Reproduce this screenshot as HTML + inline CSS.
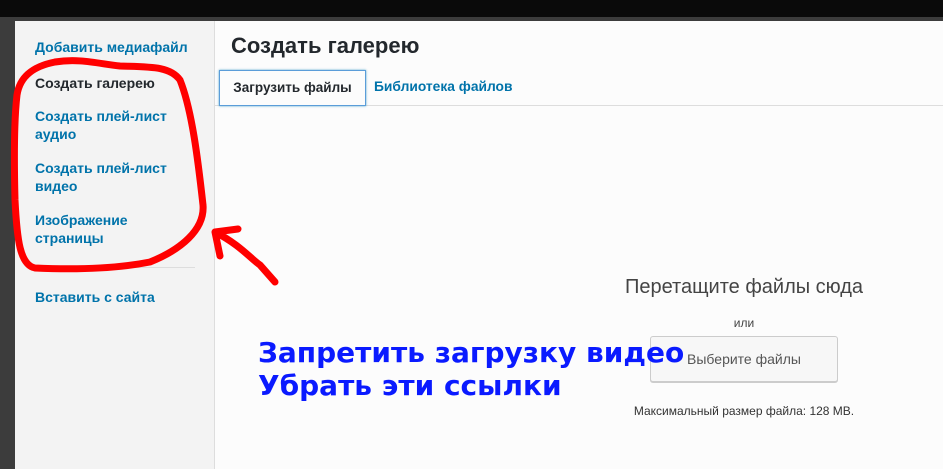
<!DOCTYPE html>
<html><head><meta charset="utf-8"><style>
*{margin:0;padding:0;box-sizing:border-box}
body{width:943px;height:469px;overflow:hidden;background:#3c3c3c;font-family:"Liberation Sans","DejaVu Sans",sans-serif;position:relative}
.top{position:absolute;left:0;top:0;width:943px;height:17px;background:#0a0a0a}
.side{position:absolute;left:15px;top:21px;width:200px;height:448px;background:#f3f3f3;border-right:1px solid #ddd}
.side a{position:absolute;left:20px;font-size:14px;font-weight:bold;color:#0073aa;line-height:18px;text-decoration:none}
.main{position:absolute;left:215px;top:21px;width:728px;height:448px;background:#fcfcfc}
h1{position:absolute;left:16px;top:12px;font-size:22px;color:#23282d;font-weight:bold}
.tabs{position:absolute;left:0;top:84px;width:728px;border-top:1px solid #ddd}
.tab{position:absolute;top:49px;left:4px;width:147px;height:36px;border:1px solid #5b9dd9;box-shadow:0 0 2px rgba(30,140,190,.8);font-size:13.5px;font-weight:bold;color:#23282d;line-height:34px;text-align:center;background:#fcfcfc}
.tab2{position:absolute;top:58px;left:159px;font-size:13.8px;font-weight:bold;color:#0073aa}
.c{position:absolute;text-align:center;color:#444}
.btn{position:absolute;left:435px;top:315px;width:188px;height:46px;border:1px solid #ccc;border-radius:3px;background:#f7f7f7;box-shadow:0 1px 0 #ccc;font-size:14px;color:#555;line-height:44px;text-align:center}
.blue{position:absolute;left:258px;top:336px;font-family:"DejaVu Sans",sans-serif;font-weight:bold;font-size:28px;line-height:33px;color:#0a1aff;white-space:nowrap}
</style></head><body>
<div class="top"></div>
<div class="side">
<a style="top:17px">Добавить медиафайл</a>
<a style="top:53px;color:#23282d">Создать галерею</a>
<a style="top:86px">Создать плей-лист<br>аудио</a>
<a style="top:138px">Создать плей-лист<br>видео</a>
<a style="top:190px">Изображение<br>страницы</a>
<div style="position:absolute;left:20px;top:246px;width:160px;border-top:1px solid #ddd"></div>
<a style="top:267px">Вставить с сайта</a>
</div>
<div class="main">
<h1>Создать галерею</h1>
<div class="tabs"></div>
<div class="tab">Загрузить файлы</div>
<div class="tab2">Библиотека файлов</div>
<div class="c" style="left:359px;width:340px;top:255px;font-size:20px">Перетащите файлы сюда</div>
<div class="c" style="left:479px;width:100px;top:295px;font-size:12px">или</div>
<div class="btn">Выберите файлы</div>
<div class="c" style="left:359px;width:340px;top:383px;font-size:12px;color:#333">Максимальный размер файла: 128 MB.</div>
</div>
<svg style="position:absolute;left:0;top:0" width="943" height="469">
<path d="M55 62 C80 58 100 64 120 66 C150 67 170 66 180 80 C192 110 198 160 203 205 C205 230 180 250 150 262 C120 268 80 270 35 268 C20 265 17 240 15 200 C14 160 14 120 17 95 C20 75 35 66 55 62" fill="none" stroke="#f00" stroke-width="7" stroke-linecap="round"/>
<path d="M275 282 L260 265 C250 258 240 245 215 232 M215 232 L238 229 M215 232 L220 256" fill="none" stroke="#f00" stroke-width="7" stroke-linecap="round" stroke-linejoin="round"/>
</svg>
<div class="blue">Запретить загрузку видео<br>Убрать эти ссылки</div>
</body></html>
